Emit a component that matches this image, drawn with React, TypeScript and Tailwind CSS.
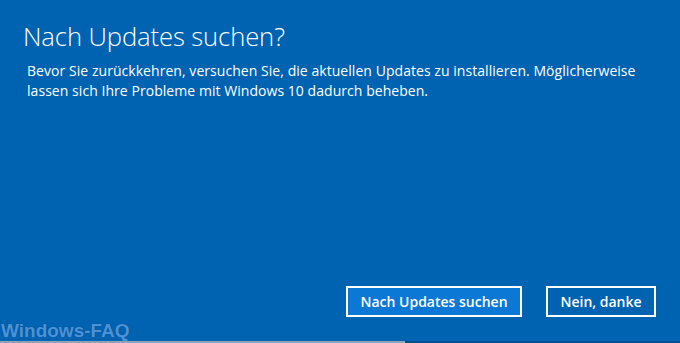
import * as React from 'react'

export default function App() {
  return (
    <div className="relative w-[680px] h-[343px] overflow-hidden bg-[#0063b1] text-white font-['Open_Sans',sans-serif] flex flex-col">
      {/* content */}
      <div className="flex-1 flex flex-col px-[23px] pt-[19px]">
        <h1 className="text-[25.6px] leading-[35px] font-light tracking-[-0.1px]">Nach Updates suchen?</h1>
        <p className="mt-[7px] pl-[4px] text-[14px] leading-[20px] tracking-[0.05px]">
          Bevor Sie zurückkehren, versuchen Sie, die aktuellen Updates zu installieren. Möglicherweise
          <br />
          lassen sich Ihre Probleme mit Windows 10 dadurch beheben.
        </p>
      </div>

      {/* buttons */}
      <div className="flex justify-end gap-[24px] pr-[24px] pb-[26px]">
        <button className="w-[176px] h-[31px] border-2 border-white bg-[#0a78d4] text-[14px] font-semibold">
          Nach Updates suchen
        </button>
        <button className="w-[110px] h-[31px] border-2 border-white bg-transparent text-[14px] font-semibold">
          Nein, danke
        </button>
      </div>

      {/* watermark */}
      <div className="absolute left-[1px] bottom-[1px] text-[19px] leading-[22px] font-bold font-['Liberation_Sans',sans-serif] text-[#4b93d9] [text-shadow:0_0_1px_#0b4f8f,0_0_1px_#0b4f8f]">
        Windows-FAQ
      </div>

      {/* bottom strip */}
      <div className="absolute left-0 right-0 bottom-0 h-[2px] flex">
        <div className="w-[405px] bg-[#8fa3b6]" />
        <div className="flex-1 bg-[#004f90]" />
      </div>
    </div>
  )
}
